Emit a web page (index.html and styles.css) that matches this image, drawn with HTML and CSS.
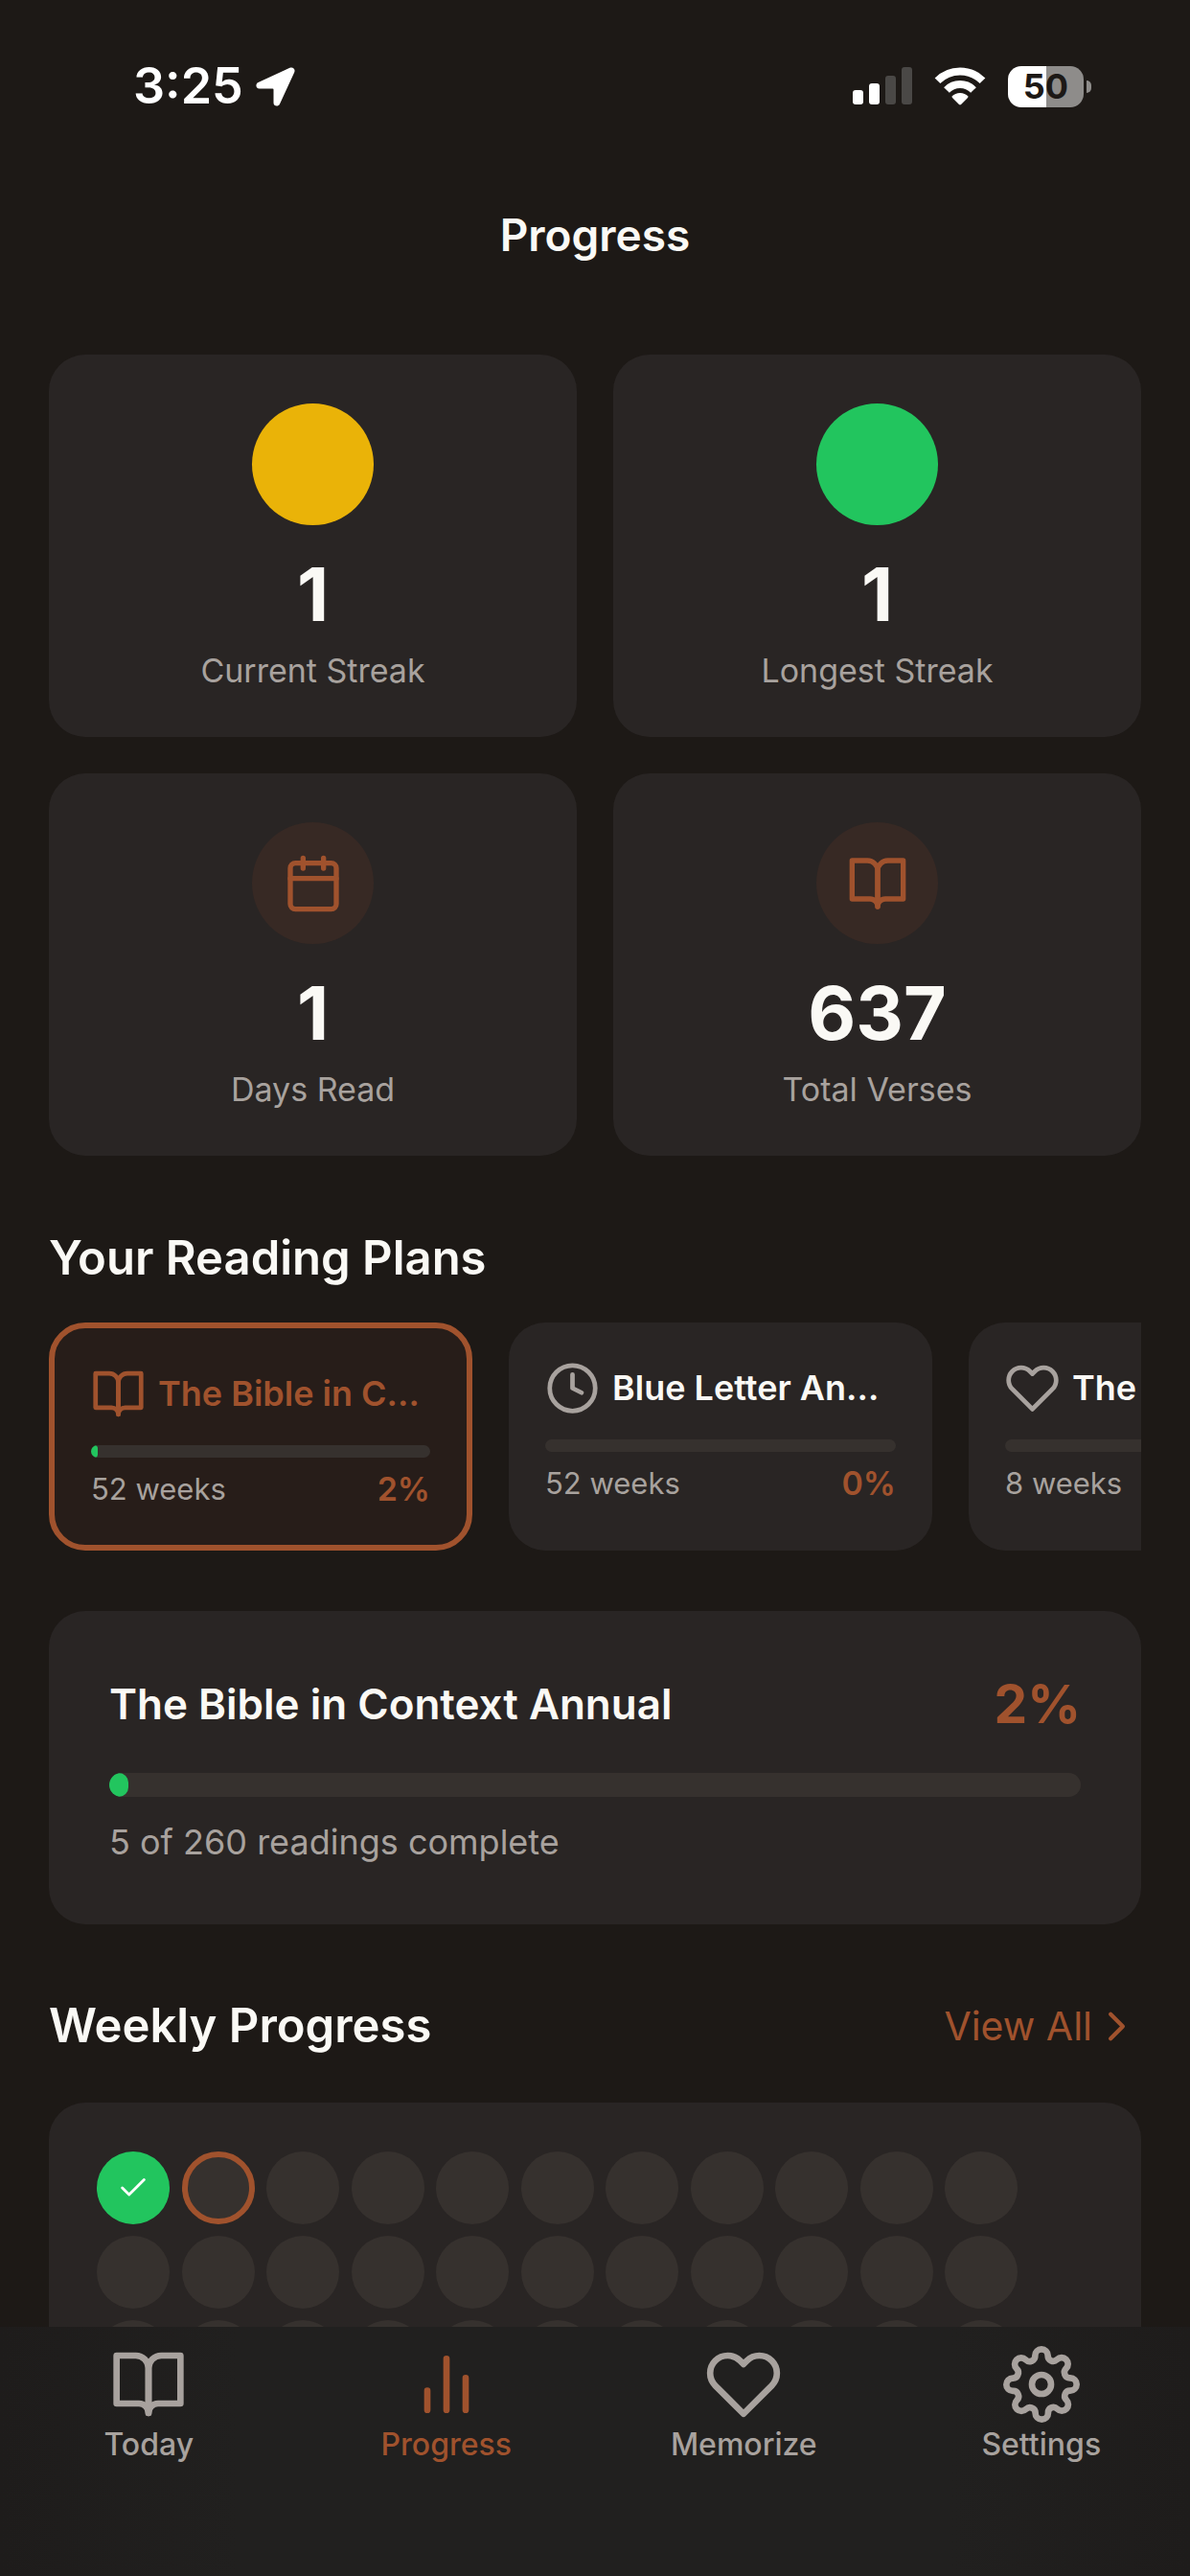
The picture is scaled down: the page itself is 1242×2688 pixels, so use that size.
FILE: index.html
```html
<!DOCTYPE html>
<html lang="en">
<head>
<meta charset="utf-8">
<meta name="viewport" content="width=device-width, initial-scale=1">
<title>Progress</title>
<link rel="stylesheet" href="styles.css">
</head>
<body>
<svg class="sprite" aria-hidden="true">
  <symbol id="book" viewBox="0 0 24 24"><path d="M2 3h6a4 4 0 0 1 4 4v14a3 3 0 0 0-3-3H2z"/><path d="M22 3h-6a4 4 0 0 0-4 4v14a3 3 0 0 1 3-3h7z"/></symbol>
  <symbol id="heart" viewBox="0 0 24 24"><path d="M20.84 4.61a5.5 5.5 0 0 0-7.78 0L12 5.67l-1.06-1.06a5.5 5.5 0 0 0-7.78 7.78l1.06 1.06L12 21.23l7.78-7.78 1.06-1.06a5.5 5.5 0 0 0 0-7.78z"/></symbol>
  <symbol id="clock" viewBox="0 0 24 24"><circle cx="12" cy="12" r="10"/><path d="M12 6v6l4 2"/></symbol>
  <symbol id="calendar" viewBox="0 0 24 24"><rect x="3" y="4" width="18" height="18" rx="2"/><path d="M16 2v4M8 2v4M3 10h18"/></symbol>
  <symbol id="bars" viewBox="0 0 24 24"><path d="M18 20V10M12 20V4M6 20v-6" /></symbol>
  <symbol id="gear" viewBox="0 0 24 24"><circle cx="12" cy="12" r="3"/><path d="M19.4 15a1.65 1.65 0 0 0 .33 1.82l.06.06a2 2 0 0 1 0 2.83 2 2 0 0 1-2.83 0l-.06-.06a1.65 1.65 0 0 0-1.82-.33 1.65 1.65 0 0 0-1 1.51V21a2 2 0 0 1-2 2 2 2 0 0 1-2-2v-.09A1.65 1.65 0 0 0 9 19.4a1.65 1.65 0 0 0-1.82.33l-.06.06a2 2 0 0 1-2.83 0 2 2 0 0 1 0-2.83l.06-.06a1.65 1.65 0 0 0 .33-1.82 1.65 1.65 0 0 0-1.51-1H3a2 2 0 0 1-2-2 2 2 0 0 1 2-2h.09A1.65 1.65 0 0 0 4.6 9a1.65 1.65 0 0 0-.33-1.82l-.06-.06a2 2 0 0 1 0-2.83 2 2 0 0 1 2.83 0l.06.06a1.65 1.65 0 0 0 1.82.33H9a1.65 1.65 0 0 0 1-1.51V3a2 2 0 0 1 2-2 2 2 0 0 1 2 2v.09a1.65 1.65 0 0 0 1 1.51 1.65 1.65 0 0 0 1.82-.33l.06-.06a2 2 0 0 1 2.83 0 2 2 0 0 1 0 2.83l-.06.06a1.65 1.65 0 0 0-.33 1.82V9a1.65 1.65 0 0 0 1.51 1H21a2 2 0 0 1 2 2 2 2 0 0 1-2 2h-.09a1.65 1.65 0 0 0-1.51 1z"/></symbol>
  <symbol id="chevron" viewBox="0 0 24 24"><path d="M9 18l6-6-6-6"/></symbol>
  <symbol id="check" viewBox="0 0 24 24"><path d="M20 6L9 17l-5-5"/></symbol>
</svg>

<main class="content">
  <div class="status">
    <div class="status-left">
      <span>3:25</span>
      <svg class="arrow" viewBox="0 0 41 41" aria-hidden="true"><path d="M35.500 .8L2.500 16C-.8 17.600 0 22.500 3.700 22.500H17.500Q18.500 22.500 18.500 23.500V37.300C18.500 41 23.400 41.800 25 38.500L40.200 5.500C41.600 2.300 38.700-.6 35.500 .8z"/></svg>
    </div>
    <div class="status-right">
      <svg class="signal" viewBox="0 0 62 40" aria-hidden="true"><rect y="24" width="11" height="15" rx="3"/><rect x="17" y="17" width="11" height="22" rx="3"/><rect class="dim" x="34" y="9" width="11" height="30" rx="3"/><rect class="dim" x="51" width="11" height="39" rx="3"/></svg>
      <svg class="wifi" viewBox="0 0 54 40" aria-hidden="true"><path d="M3.500 14.300A33 33 0 0 1 50.500 14.300"/><path d="M13 24A19.500 19.500 0 0 1 41 24"/><path class="dot" d="M18.500 30.500A12 12 0 0 1 35.500 30.500Q35.600 31.400 35 32L28 39Q27 39.800 26 39L19 32Q18.400 31.400 18.500 30.500z"/></svg>
      <div class="battery"><span class="cell">50</span><span class="nub"></span></div>
    </div>
  </div>

  <h1 class="title">Progress</h1>

  <section class="stats">
    <div class="card stat"><span class="disc yellow"></span><strong class="num">1</strong><span class="label">Current Streak</span></div>
    <div class="card stat"><span class="disc green"></span><strong class="num">1</strong><span class="label">Longest Streak</span></div>
    <div class="card stat"><span class="disc"><svg class="icon i64"><use href="#calendar"/></svg></span><strong class="num">1</strong><span class="label">Days Read</span></div>
    <div class="card stat"><span class="disc"><svg class="icon i64"><use href="#book"/></svg></span><strong class="num">637</strong><span class="label">Total Verses</span></div>
  </section>

  <section class="plans-section">
    <h2 class="heading">Your Reading Plans</h2>
    <div class="plans">
      <button type="button" class="card plan selected">
        <span class="plan-head"><svg class="icon i57"><use href="#book"/></svg><span class="plan-name">The Bible in Context Annual</span></span>
        <span class="track"><span class="fill" style="width:2%"></span></span>
        <span class="plan-meta"><span>52 weeks</span><span class="pct">2%</span></span>
      </button>
      <button type="button" class="card plan">
        <span class="plan-head"><svg class="icon i57"><use href="#clock"/></svg><span class="plan-name">Blue Letter Annual</span></span>
        <span class="track"></span>
        <span class="plan-meta"><span>52 weeks</span><span class="pct">0%</span></span>
      </button>
      <button type="button" class="card plan">
        <span class="plan-head"><svg class="icon i57"><use href="#heart"/></svg><span class="plan-name">The Gospels</span></span>
        <span class="track"></span>
        <span class="plan-meta"><span>8 weeks</span><span class="pct">0%</span></span>
      </button>
    </div>
  </section>

  <section class="card detail">
    <div class="detail-head"><h3 class="detail-name">The Bible in Context Annual</h3><strong class="detail-pct">2%</strong></div>
    <div class="track large"><span class="fill" style="width:2%"></span></div>
    <p class="detail-note">5 of 260 readings complete</p>
  </section>

  <section class="weekly">
    <div class="weekly-head"><h2 class="heading">Weekly Progress</h2><a class="view-all" href="#weeks">View All<svg class="icon i51"><use href="#chevron"/></svg></a></div>
    <div class="card weeks-card">
      <div class="weeks" id="weeks">
        <span class="week done"><svg class="icon"><use href="#check"/></svg></span><span class="week current"></span><span class="week"></span><span class="week"></span><span class="week"></span><span class="week"></span><span class="week"></span><span class="week"></span><span class="week"></span><span class="week"></span><span class="week"></span>
        <span class="week"></span><span class="week"></span><span class="week"></span><span class="week"></span><span class="week"></span><span class="week"></span><span class="week"></span><span class="week"></span><span class="week"></span><span class="week"></span><span class="week"></span>
        <span class="week"></span><span class="week"></span><span class="week"></span><span class="week"></span><span class="week"></span><span class="week"></span><span class="week"></span><span class="week"></span><span class="week"></span><span class="week"></span><span class="week"></span>
      </div>
    </div>
  </section>
</main>

<nav class="tabs">
  <a class="tab" href="#today"><svg class="icon"><use href="#book"/></svg>Today</a>
  <a class="tab active" href="#progress"><svg class="icon"><use href="#bars"/></svg>Progress</a>
  <a class="tab" href="#memorize"><svg class="icon"><use href="#heart"/></svg>Memorize</a>
  <a class="tab" href="#settings"><svg class="icon"><use href="#gear"/></svg>Settings</a>
</nav>
</body>
</html>
```

FILE: styles.css
```css
:root {
  --bg: #1d1916;
  --card: #292524;
  --track: #36312e;
  --text: #faf9f5;
  --muted: #a8a29e;
  --accent: #a0522d;
  --green: #22c55e;
}

* { box-sizing: border-box; }

body {
  margin: 0;
  height: 100vh;
  display: flex;
  flex-direction: column;
  background: var(--bg);
  color: var(--text);
  font-family: Inter, "Liberation Sans", sans-serif;
}

h1, h2, h3, p { margin: 0; }
a { color: inherit; text-decoration: none; }
button { font: inherit; color: inherit; border: 0; text-align: left; }

.sprite { display: none; }

.icon {
  flex: none;
  fill: none;
  stroke: currentColor;
  stroke-width: 2;
  stroke-linecap: round;
  stroke-linejoin: round;
}
.i64 { width: 64px; height: 64px; }
.i57 { width: 57px; height: 57px; }
.i51 { width: 51px; height: 51px; }

.content {
  flex: 1;
  min-height: 0;
  overflow-y: auto;
  scrollbar-width: none;
  padding: 0 51px;
}

.card { background: var(--card); border-radius: 38px; }

/* Status bar */
.status {
  height: 180px;
  display: flex;
  align-items: center;
  justify-content: space-between;
  padding: 0 52px 0 88px;
  color: #fff;
}
.status-left {
  display: flex;
  align-items: center;
  gap: 13px;
  font-size: 52px;
  font-weight: 600;
  line-height: 60px;
}
.arrow { width: 41px; height: 41px; fill: #fff; }
.status-right { display: flex; align-items: center; gap: 23px; }
.signal { width: 62px; height: 40px; fill: #fff; }
.signal .dim { fill: #4a4846; }
.wifi { width: 54px; height: 40px; fill: none; stroke: #fff; stroke-width: 8; }
.wifi .dot { fill: #fff; stroke: none; }
.battery { display: flex; align-items: center; gap: 3px; }
.cell {
  width: 79px;
  border-radius: 14px;
  background: linear-gradient(90deg, #fff 51%, #8e8c8a 51%);
  color: #1d1916;
  font-size: 36px;
  font-weight: 700;
  line-height: 43px;
  text-align: center;
}
.nub { width: 5px; height: 13px; border-radius: 0 5px 5px 0; background: #8e8c8a; }

.title {
  margin: 35px 0 95px;
  font-size: 46px;
  font-weight: 600;
  line-height: 60px;
  text-align: center;
}

/* Summary cards */
.stats { display: grid; grid-template-columns: 1fr 1fr; gap: 38px; }
.stat {
  display: flex;
  flex-direction: column;
  align-items: center;
  padding: 51px 24px 46px;
}
.disc {
  width: 127px;
  height: 127px;
  border-radius: 50%;
  display: flex;
  align-items: center;
  justify-content: center;
  background: #372924;
  color: var(--accent);
}
.yellow { background: #eab308; }
.green { background: var(--green); }
.num { margin: 24px 0 9px; font-size: 77px; font-weight: 700; line-height: 96px; }
.label { font-size: 34px; line-height: 46px; color: var(--muted); }

/* Reading plans */
.heading { font-size: 49px; font-weight: 600; line-height: 60px; }
.plans-section { margin-top: 77px; }
.plans { display: flex; gap: 38px; margin-top: 37px; overflow: hidden; }
.plan {
  flex: none;
  width: 442px;
  display: flex;
  flex-direction: column;
  padding: 38px;
}
.plan.selected {
  border: 6px solid var(--accent);
  padding-bottom: 37px;
  background: #271d19;
}
.plan-head { display: flex; align-items: center; gap: 13px; height: 60px; color: var(--muted); }
.plan-name {
  min-width: 0;
  flex: 1;
  overflow: hidden;
  white-space: nowrap;
  text-overflow: ellipsis;
  font-size: 36px;
  font-weight: 600;
  line-height: 46px;
  color: var(--text);
}
.selected .plan-head, .selected .plan-name { color: var(--accent); }
.track {
  display: block;
  height: 13px;
  margin: 24px 0 12px;
  border-radius: 13px;
  background: var(--track);
  overflow: hidden;
}
.fill { display: block; height: 100%; border-radius: 13px; background: var(--green); }
.plan-meta {
  display: flex;
  align-items: center;
  justify-content: space-between;
  font-size: 31px;
  line-height: 42px;
  color: var(--muted);
}
.pct { font-size: 34px; font-weight: 600; color: var(--accent); }

/* Selected plan */
.detail { margin-top: 63px; padding: 64px 63px 61px; }
.detail-head { display: flex; align-items: center; justify-content: space-between; height: 66px; }
.detail-name { font-size: 44px; font-weight: 600; line-height: 60px; }
.detail-pct { font-size: 55px; font-weight: 700; line-height: 66px; color: var(--accent); }
.track.large { height: 25px; margin: 39px 0 22px; }
.detail-note { font-size: 36px; line-height: 50px; color: var(--muted); }

/* Weeks */
.weekly { margin-top: 63px; }
.weekly-head { display: flex; align-items: center; justify-content: space-between; height: 86px; }
.view-all { display: flex; align-items: center; font-size: 41px; line-height: 60px; color: var(--accent); }
.weeks-card { margin-top: 37px; padding: 51px 50px; }
.weeks {
  max-width: 961px;
  display: grid;
  grid-template-columns: repeat(11, 76px);
  justify-content: space-between;
  row-gap: 12px;
}
.week {
  height: 76px;
  border-radius: 50%;
  display: flex;
  align-items: center;
  justify-content: center;
  background: var(--track);
}
.done { background: var(--green); color: #fff; }
.done .icon { width: 34px; height: 34px; }
.current { border: 6px solid var(--accent); }

/* Tab bar */
.tabs {
  flex: none;
  height: 260px;
  display: grid;
  grid-template-columns: repeat(4, 1fr);
  align-items: start;
  padding-top: 20px;
  background: linear-gradient(90deg, #1e1c1b, #21201f 20%, #21201f 80%, #1e1c1b);
}
.tab {
  display: flex;
  flex-direction: column;
  align-items: center;
  gap: 3px;
  font-size: 32px;
  font-weight: 500;
  line-height: 40px;
  color: var(--muted);
}
.tab .icon { width: 80px; height: 80px; }
.tab.active { color: var(--accent); }
```
